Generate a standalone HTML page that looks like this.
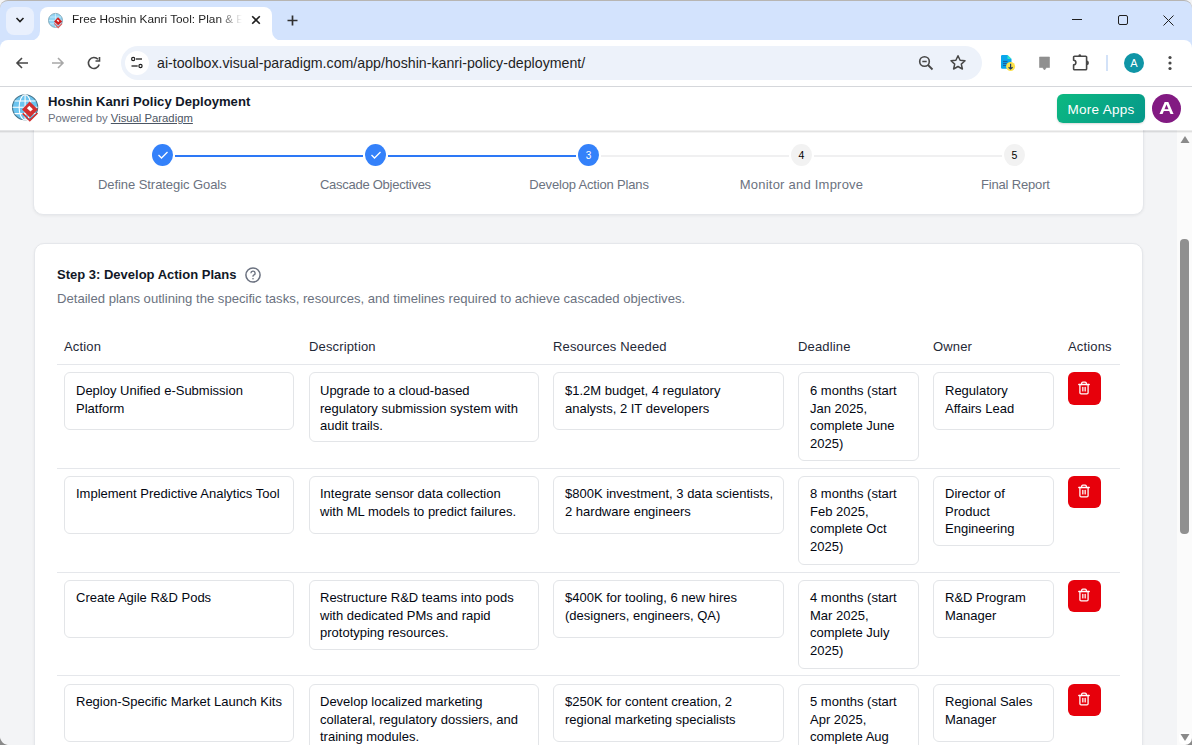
<!DOCTYPE html>
<html><head><meta charset="utf-8">
<style>
*{box-sizing:border-box;margin:0;padding:0}
html,body{width:1192px;height:745px;overflow:hidden;font-family:"Liberation Sans",sans-serif;background:#f3f4f6;position:relative}
.t{position:absolute;white-space:nowrap;line-height:1}
#tabstrip{position:absolute;left:0;top:0;width:1192px;height:52px;background:#d3e3fd;border-top:1px solid #b7b5b2;border-radius:8px 8px 0 0;overflow:hidden}
#tabdd{position:absolute;left:6px;top:6px;width:28px;height:28px;border-radius:8px;background:#e9f0fd}
#tab{position:absolute;left:40px;top:6px;width:232px;height:35px;background:#fff;border-radius:8px 8px 0 0}
.flare{position:absolute;top:30px;width:10px;height:10px;background:#fff}
.flare:after{content:"";position:absolute;left:0;top:0;width:10px;height:10px;background:#d3e3fd}
#flareL{left:30px}
#flareL:after{border-bottom-right-radius:10px}
#flareR{left:272px}
#flareR:after{border-bottom-left-radius:10px}
#toolbar{position:absolute;left:0;top:40px;width:1192px;height:46px;background:#fff;border-radius:8px 8px 0 0}
#tbline{position:absolute;left:0;top:86px;width:1192px;height:1px;background:#d5d7db}
#omni{position:absolute;left:121px;top:46px;width:861px;height:34px;border-radius:17px;background:#edf2fa}
#siteinfo{position:absolute;left:125px;top:51px;width:24px;height:24px;border-radius:12px;background:#fff}
#apphdr{position:absolute;left:0;top:87px;width:1192px;height:43px;background:#fff;z-index:5}
#scroll{position:absolute;left:1177px;top:130px;width:15px;height:615px;background:#fbfbfb;z-index:6}
#thumb{position:absolute;left:3px;top:109px;width:9px;height:295px;border-radius:4px;background:#909090}
.card{position:absolute;background:#fff;border:1px solid #e5e7eb;border-radius:10px;box-shadow:0 1px 3px rgba(0,0,0,.06)}
.ta{position:absolute;border:1px solid #e3e5e8;border-radius:6px;background:#fff;font-size:13px;line-height:17.5px;color:#030712;padding:9px 0 0 11px;white-space:nowrap}
.del{position:absolute;left:1068px;width:33px;height:33px;border-radius:6px;background:#e7000b;display:flex;align-items:center;justify-content:center}
.hl{position:absolute;left:57px;width:1063px;height:1px;background:#e5e7eb}
.th{position:absolute;top:340px;font-size:13px;letter-spacing:0.15px;color:#1f2937;line-height:1}
.step{position:absolute;top:144px;width:21px;height:22px;border-radius:50%;background:#3481fa;color:#fff;font-size:10px;display:flex;align-items:center;justify-content:center}
.step.p{background:#f2f2f2;color:#000;font-size:10.5px}
.slabel{position:absolute;top:178px;font-size:13px;color:#6b7280;line-height:1;white-space:nowrap;transform:translateX(-50%)}
.sline{position:absolute;top:155px;height:2px;background:#2d78f6}
.sline.p{background:#f0f0f1;height:2px}
</style></head><body>

<!-- ============ Browser chrome ============ -->
<div id="tabstrip">
  <div class="flare" id="flareL"></div>
  <div id="tab"></div>
  <div class="flare" id="flareR"></div>
  <div id="tabdd"></div>
  <svg style="position:absolute;left:15px;top:15px" width="10" height="8" viewBox="0 0 10 8"><path d="M1.5 2 L5 5.5 L8.5 2" fill="none" stroke="#1f1f1f" stroke-width="1.6"/></svg>
  <!-- favicon -->
  <svg style="position:absolute;left:48px;top:11px" width="16" height="17" viewBox="0 0 16 17">
    <circle cx="7.5" cy="8.4" r="7" fill="#92d5f5" stroke="#7fa5b6" stroke-width=".9"/>
    <path d="M1 8.4h13M7.5 1.6v13.6M2 5h11M2 11.8h11" stroke="#e6f6fd" stroke-width=".6"/>
    <path d="M6.3 11.4L10.2 15.6L14 11.6" fill="none" stroke="#e35d5d" stroke-width="1.1"/>
    <path d="M10 5.2L14.2 9.4L10.2 13.3L6 9.4Z" fill="#d32020"/>
    <path d="M9.7 7.4L11.3 9L10.3 10L8.7 8.4Z" fill="#fff"/>
  </svg>
  <div class="t" style="left:72px;top:13px;font-size:11.8px;color:#1f1f1f;width:173px;overflow:hidden;-webkit-mask-image:linear-gradient(90deg,#000 146px,transparent 170px)">Free Hoshin Kanri Tool: Plan &amp; Execute</div>
  <svg style="position:absolute;left:251px;top:14px" width="10" height="10" viewBox="0 0 10 10"><path d="M1.2 1.2L8.8 8.8M8.8 1.2L1.2 8.8" stroke="#1f1f1f" stroke-width="1.6"/></svg>
  <svg style="position:absolute;left:287px;top:14px" width="11" height="11" viewBox="0 0 11 11"><path d="M5.5 0.5V10.5M0.5 5.5H10.5" stroke="#303030" stroke-width="1.7"/></svg>
  <!-- window controls -->
  <div style="position:absolute;left:1072px;top:18px;width:10px;height:1px;background:#1f1f1f"></div>
  <div style="position:absolute;left:1118px;top:14px;width:10px;height:10px;border:1px solid #1f1f1f;border-radius:2px"></div>
  <svg style="position:absolute;left:1163px;top:14px" width="11" height="11" viewBox="0 0 11 11"><path d="M0.5 0.5L10.5 10.5M10.5 0.5L0.5 10.5" stroke="#1f1f1f" stroke-width="1"/></svg>
</div>

<div id="toolbar"></div>
<div id="tbline"></div>
<!-- nav icons -->
<svg style="position:absolute;left:14px;top:55px" width="16" height="16" viewBox="0 0 16 16"><path d="M14 8H3M8 3L3 8L8 13" fill="none" stroke="#474747" stroke-width="1.6"/></svg>
<svg style="position:absolute;left:50px;top:55px" width="16" height="16" viewBox="0 0 16 16"><path d="M2 8H13M8 3L13 8L8 13" fill="none" stroke="#a8a8a8" stroke-width="1.6"/></svg>
<svg style="position:absolute;left:86px;top:55px" width="16" height="16" viewBox="0 0 16 16"><path d="M13.2 9.5A5.5 5.5 0 1 1 12 4.3" fill="none" stroke="#474747" stroke-width="1.6"/><path d="M13.5 2V6H9.5" fill="none" stroke="#474747" stroke-width="1.6"/></svg>
<div id="omni"></div>
<div id="siteinfo"></div>
<svg style="position:absolute;left:130px;top:56px" width="14" height="14" viewBox="0 0 14 14"><circle cx="3.2" cy="3" r="1.6" fill="none" stroke="#1f1f1f" stroke-width="1.2"/><path d="M6 3H12" stroke="#1f1f1f" stroke-width="1.3"/><circle cx="10.5" cy="10" r="1.6" fill="none" stroke="#1f1f1f" stroke-width="1.2"/><path d="M1.5 10H7.7" stroke="#1f1f1f" stroke-width="1.3"/></svg>
<div class="t" style="left:157px;top:56px;font-size:14.2px;color:#1f1f1f">ai-toolbox.visual-paradigm.com<span style="color:#1f1f1f">/app/hoshin-kanri-policy-deployment/</span></div>
<!-- zoom icon -->
<svg style="position:absolute;left:918px;top:55px" width="16" height="16" viewBox="0 0 16 16"><circle cx="6.5" cy="6.5" r="4.8" fill="none" stroke="#474747" stroke-width="1.6"/><path d="M4.3 6.5H8.7" stroke="#474747" stroke-width="1.5"/><path d="M10 10L14.5 14.5" stroke="#474747" stroke-width="1.8"/></svg>
<!-- star -->
<svg style="position:absolute;left:949px;top:54px" width="18" height="18" viewBox="0 0 18 18"><path d="M9 1.8L11.1 6.3L16 6.8L12.3 10.1L13.4 15L9 12.5L4.6 15L5.7 10.1L2 6.8L6.9 6.3Z" fill="none" stroke="#474747" stroke-width="1.5" stroke-linejoin="round"/></svg>
<!-- ext doc -->
<svg style="position:absolute;left:990px;top:50px" width="70" height="26" viewBox="0 0 70 26">
  <path d="M12 5H17.5L21.5 9V17.5A1.3 1.3 0 0 1 20.2 18.8H12.3A1.3 1.3 0 0 1 11 17.5V6.3A1.3 1.3 0 0 1 12.3 5Z" fill="#0aa6ec"/>
  <path d="M17.5 5L21.5 9H17.5Z" fill="#2ee6c8"/>
  <path d="M13 11.4H17.5M13 13.4H17.5M13 15.4H16.5" stroke="#1e5a9a" stroke-width="1"/>
  <circle cx="20.6" cy="16.5" r="4.5" fill="#fde24a"/>
  <path d="M20.6 13.8V19M18.6 17.2L20.6 19L22.6 17.2" fill="none" stroke="#1f3a5a" stroke-width="1.2"/>
  <path d="M49.5 7H59.5V17.5H56.5L54.5 20L52.5 17.5H49.5Z" fill="#8f8f8f" stroke="#8f8f8f" stroke-width=".6" stroke-linejoin="round"/>
</svg>
<!-- puzzle -->
<svg style="position:absolute;left:1065px;top:48px" width="30" height="30" viewBox="0 0 30 30"><path d="M9.5 8.3H20.7A0.9 0.9 0 0 1 21.6 9.2V20.8A0.9 0.9 0 0 1 20.7 21.7H9.5A0.9 0.9 0 0 1 8.6 20.8V16.9A2.3 2.3 0 0 0 8.6 12.3V9.2A0.9 0.9 0 0 1 9.5 8.3Z" fill="none" stroke="#474747" stroke-width="1.6" stroke-linejoin="round"/><circle cx="14.8" cy="7.6" r="1.3" fill="#474747"/><path d="M21.6 13.2A1.7 1.7 0 0 1 21.6 16.6Z" fill="#474747" stroke="#474747" stroke-width="1.2"/></svg>
<div style="position:absolute;left:1106px;top:55px;width:2px;height:16px;background:#d3e2f8"></div>
<div style="position:absolute;left:1124px;top:53px;width:20px;height:20px;border-radius:10px;background:#0f95a6;color:#fff;font-size:11px;text-align:center;line-height:20px">A</div>
<svg style="position:absolute;left:1166px;top:55px" width="8" height="16" viewBox="0 0 8 16"><circle cx="4" cy="2.5" r="1.6" fill="#474747"/><circle cx="4" cy="8" r="1.6" fill="#474747"/><circle cx="4" cy="13.5" r="1.6" fill="#474747"/></svg>

<!-- ============ Page content ============ -->
<div class="card" style="left:33px;top:100px;width:1111px;height:115px"></div>
<div class="sline" style="left:175px;width:188px"></div>
<div class="sline" style="left:388px;width:188px"></div>
<div class="sline p" style="left:601px;width:188px"></div>
<div class="sline p" style="left:814px;width:188px"></div>
<div class="step" style="left:152px"><svg width="12" height="10" viewBox="0 0 12 10"><path d="M1.5 5L4.5 8L10.5 2" fill="none" stroke="#fff" stroke-width="1.3"/></svg></div>
<div class="step" style="left:365px"><svg width="12" height="10" viewBox="0 0 12 10"><path d="M1.5 5L4.5 8L10.5 2" fill="none" stroke="#fff" stroke-width="1.3"/></svg></div>
<div class="step" style="left:578px">3</div>
<div class="step p" style="left:791px">4</div>
<div class="step p" style="left:1004px">5</div>
<div class="slabel" style="left:162.3px;letter-spacing:-0.07px">Define Strategic Goals</div>
<div class="slabel" style="left:375.4px;letter-spacing:-0.26px">Cascade Objectives</div>
<div class="slabel" style="left:589px;letter-spacing:-0.17px">Develop Action Plans</div>
<div class="slabel" style="left:801.5px;letter-spacing:0.23px">Monitor and Improve</div>
<div class="slabel" style="left:1015.4px;letter-spacing:-0.17px">Final Report</div>

<div class="card" style="left:34px;top:243px;width:1109px;height:600px"></div>
<div class="t" style="left:57px;top:268px;font-size:13px;font-weight:bold;color:#111827">Step 3: Develop Action Plans</div>
<svg style="position:absolute;left:245px;top:267px" width="16" height="16" viewBox="0 0 16 16"><circle cx="8" cy="8" r="7.1" fill="none" stroke="#6b7280" stroke-width="1.5"/><path d="M5.9 6.2A2.1 2.1 0 1 1 8.6 8.2C8.1 8.4 8 8.7 8 9.3V9.8" fill="none" stroke="#6b7280" stroke-width="1.3"/><circle cx="8" cy="11.8" r=".8" fill="#6b7280"/></svg>
<div class="t" style="left:57px;top:292px;font-size:13.1px;color:#6b7280">Detailed plans outlining the specific tasks, resources, and timelines required to achieve cascaded objectives.</div>

<div class="th" style="left:64px">Action</div>
<div class="th" style="left:309px">Description</div>
<div class="th" style="left:553px">Resources Needed</div>
<div class="th" style="left:798px">Deadline</div>
<div class="th" style="left:933px">Owner</div>
<div class="th" style="left:1068px">Actions</div>
<div class="hl" style="top:364px"></div>
<div class="ta" style="left:64px;top:372px;width:230px;height:58px;padding-top:9px;padding-left:11px">Deploy Unified e-Submission<br>Platform</div>
<div class="ta" style="left:309px;top:372px;width:230px;height:70px;padding-top:9px;padding-left:10px">Upgrade to a cloud-based<br>regulatory submission system with<br>audit trails.</div>
<div class="ta" style="left:553px;top:372px;width:231px;height:58px;padding-top:9px;padding-left:11px">$1.2M budget, 4 regulatory<br>analysts, 2 IT developers</div>
<div class="ta" style="left:798px;top:372px;width:121px;height:89px;padding-top:9px;padding-left:11px">6 months (start<br>Jan 2025,<br>complete June<br>2025)</div>
<div class="ta" style="left:933px;top:372px;width:121px;height:58px;padding-top:9px;padding-left:11px">Regulatory<br>Affairs Lead</div>
<div class="del" style="top:372px;height:33px"><svg style="transform:translate(-1px,-1px)" width="14" height="14" viewBox="0 0 24 24" fill="none" stroke="#fff" stroke-width="2.2" stroke-linecap="round" stroke-linejoin="round"><path d="M3 6h18"/><path d="M19 6v14a2 2 0 0 1-2 2H7a2 2 0 0 1-2-2V6"/><path d="M8 6V4a2 2 0 0 1 2-2h4a2 2 0 0 1 2 2v2"/><path d="M10 11v6"/><path d="M14 11v6"/></svg></div>
<div class="hl" style="top:468px"></div>
<div class="ta" style="left:64px;top:476px;width:230px;height:58px;padding-top:8px;padding-left:11px">Implement Predictive Analytics Tool</div>
<div class="ta" style="left:309px;top:476px;width:230px;height:58px;padding-top:8px;padding-left:10px">Integrate sensor data collection<br>with ML models to predict failures.</div>
<div class="ta" style="left:553px;top:476px;width:231px;height:58px;padding-top:8px;padding-left:11px">$800K investment, 3 data scientists,<br>2 hardware engineers</div>
<div class="ta" style="left:798px;top:476px;width:121px;height:89px;padding-top:8px;padding-left:11px">8 months (start<br>Feb 2025,<br>complete Oct<br>2025)</div>
<div class="ta" style="left:933px;top:476px;width:121px;height:70px;padding-top:8px;padding-left:11px">Director of<br>Product<br>Engineering</div>
<div class="del" style="top:476px;height:32px"><svg style="transform:translate(-1px,-1px)" width="14" height="14" viewBox="0 0 24 24" fill="none" stroke="#fff" stroke-width="2.2" stroke-linecap="round" stroke-linejoin="round"><path d="M3 6h18"/><path d="M19 6v14a2 2 0 0 1-2 2H7a2 2 0 0 1-2-2V6"/><path d="M8 6V4a2 2 0 0 1 2-2h4a2 2 0 0 1 2 2v2"/><path d="M10 11v6"/><path d="M14 11v6"/></svg></div>
<div class="hl" style="top:572px"></div>
<div class="ta" style="left:64px;top:580px;width:230px;height:58px;padding-top:8px;padding-left:11px">Create Agile R&amp;D Pods</div>
<div class="ta" style="left:309px;top:580px;width:230px;height:70px;padding-top:8px;padding-left:10px">Restructure R&amp;D teams into pods<br>with dedicated PMs and rapid<br>prototyping resources.</div>
<div class="ta" style="left:553px;top:580px;width:231px;height:58px;padding-top:8px;padding-left:11px">$400K for tooling, 6 new hires<br>(designers, engineers, QA)</div>
<div class="ta" style="left:798px;top:580px;width:121px;height:89px;padding-top:8px;padding-left:11px">4 months (start<br>Mar 2025,<br>complete July<br>2025)</div>
<div class="ta" style="left:933px;top:580px;width:121px;height:58px;padding-top:8px;padding-left:11px">R&amp;D Program<br>Manager</div>
<div class="del" style="top:580px;height:32px"><svg style="transform:translate(-1px,-1px)" width="14" height="14" viewBox="0 0 24 24" fill="none" stroke="#fff" stroke-width="2.2" stroke-linecap="round" stroke-linejoin="round"><path d="M3 6h18"/><path d="M19 6v14a2 2 0 0 1-2 2H7a2 2 0 0 1-2-2V6"/><path d="M8 6V4a2 2 0 0 1 2-2h4a2 2 0 0 1 2 2v2"/><path d="M10 11v6"/><path d="M14 11v6"/></svg></div>
<div class="hl" style="top:675px"></div>
<div class="ta" style="left:64px;top:684px;width:230px;height:58px;padding-top:8px;padding-left:11px">Region-Specific Market Launch Kits</div>
<div class="ta" style="left:309px;top:684px;width:230px;height:70px;padding-top:8px;padding-left:10px">Develop localized marketing<br>collateral, regulatory dossiers, and<br>training modules.</div>
<div class="ta" style="left:553px;top:684px;width:231px;height:58px;padding-top:8px;padding-left:11px">$250K for content creation, 2<br>regional marketing specialists</div>
<div class="ta" style="left:798px;top:684px;width:121px;height:89px;padding-top:8px;padding-left:11px">5 months (start<br>Apr 2025,<br>complete Aug<br>2025)</div>
<div class="ta" style="left:933px;top:684px;width:121px;height:58px;padding-top:8px;padding-left:11px">Regional Sales<br>Manager</div>
<div class="del" style="top:684px;height:32px"><svg style="transform:translate(-1px,-1px)" width="14" height="14" viewBox="0 0 24 24" fill="none" stroke="#fff" stroke-width="2.2" stroke-linecap="round" stroke-linejoin="round"><path d="M3 6h18"/><path d="M19 6v14a2 2 0 0 1-2 2H7a2 2 0 0 1-2-2V6"/><path d="M8 6V4a2 2 0 0 1 2-2h4a2 2 0 0 1 2 2v2"/><path d="M10 11v6"/><path d="M14 11v6"/></svg></div>

<!-- ============ App header ============ -->
<div id="apphdr">
  <svg style="position:absolute;left:5px;top:1px" width="40" height="40" viewBox="0 0 40 40">
    <circle cx="20.1" cy="19.3" r="12.6" fill="#6cc4ef" stroke="#45748a" stroke-width="1.1"/>
    <path d="M7.5 19.3H32.7M20.1 6.7V32M9.5 13H30.7M9.5 25.6H30.7" stroke="#fff" stroke-width="1.1"/>
    <ellipse cx="20.1" cy="19.3" rx="6" ry="12.6" fill="none" stroke="#fff" stroke-width="1.1"/>
    <path d="M17.7 25.4L24.8 32.6L32.5 25" fill="none" stroke="#d32f2f" stroke-width="1.6"/>
    <path d="M24.7 13.6L32.9 21.6L25 29.4L17 21.4Z" fill="#d32f2f"/>
    <path d="M24.3 17.8L27.9 21.2L25.5 23.6L21.9 20.2Z" fill="#fff"/>
  </svg>
  <div class="t" style="left:48px;top:8px;font-size:13.1px;font-weight:bold;color:#111827">Hoshin Kanri Policy Deployment</div>
  <div class="t" style="left:48px;top:26px;font-size:11.3px;color:#6b7280">Powered by <span style="text-decoration:underline;color:#4b5563">Visual Paradigm</span></div>
  <div style="position:absolute;left:1057px;top:7px;width:88px;height:29px;border-radius:6px;background:linear-gradient(135deg,#0db981,#05978a);box-shadow:0 1px 2px rgba(0,0,0,.15);color:#fff;font-size:13.5px;letter-spacing:0.3px;line-height:30px;padding-top:1px;text-align:center">More Apps</div>
  <div style="position:absolute;left:1152px;top:7px;width:29px;height:29px;border-radius:15px;background:#821a82"></div><div class="t" style="left:1152px;top:14px;width:29px;text-align:center;font-size:16px;font-weight:bold;color:#fff;transform:scaleX(1.3)">A</div>
</div>

<div style="position:absolute;left:0;top:130px;width:1192px;height:1px;background:rgba(0,0,0,.06);z-index:7"></div>
<div style="position:absolute;left:0;top:131px;width:1192px;height:1px;background:rgba(0,0,0,.11);z-index:7"></div>
<div style="position:absolute;left:0;top:132px;width:1192px;height:1px;background:rgba(0,0,0,.045);z-index:7"></div>
<div id="scroll"><div id="thumb"></div>
  <svg style="position:absolute;left:3px;top:5px" width="10" height="9" viewBox="0 0 10 9"><path d="M0.5 8H9.5L5 1Z" fill="#8a8a8a"/></svg>
  <div style="position:absolute;left:2px;top:602px;width:12px;height:12px;border-radius:4px;background:#fff"></div><svg style="position:absolute;left:3px;top:603px" width="10" height="9" viewBox="0 0 10 9"><path d="M0.5 1H9.5L5 8Z" fill="#8a8a8a"/></svg>
</div>
<svg style="position:absolute;left:0;top:735px;z-index:20" width="10" height="10" viewBox="0 0 10 10"><path d="M0 0V10H10A9 9 0 0 1 0 0Z" fill="#8a8a8a"/></svg>
<svg style="position:absolute;left:1185px;top:738px;z-index:20" width="7" height="7" viewBox="0 0 7 7"><path d="M7 0V7H0A7 7 0 0 0 7 0Z" fill="#8a8a8a"/></svg>
</body></html>
